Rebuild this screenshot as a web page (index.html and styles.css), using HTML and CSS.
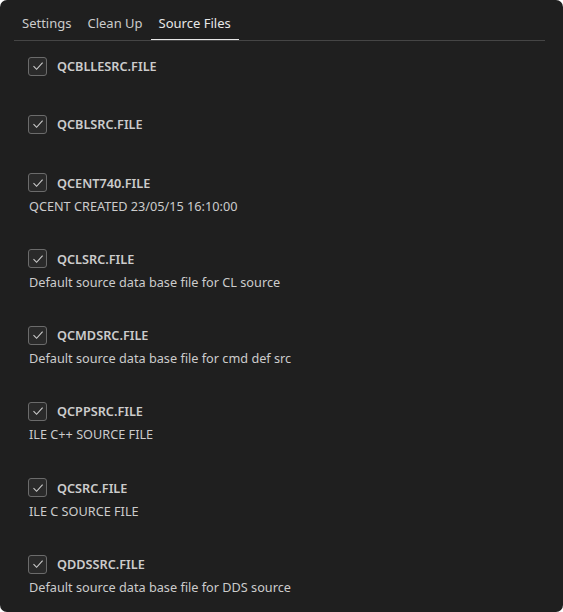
FILE: index.html
```html
<!DOCTYPE html>
<html>
<head>
<meta charset="utf-8">
<link rel="stylesheet" href="styles.css">
</head>
<body>
<div class="panel">
  <div class="tabs">
    <div class="tab">Settings</div>
    <div class="tab">Clean Up</div>
    <div class="tab active">Source Files</div>
  </div>
  <div class="list">
    <div class="item">
      <label class="row"><span class="cb"><svg viewBox="0 0 16 16"><path d="M3.5 8.2 L6.6 11.3 L12.6 4.6"/></svg></span><span class="name">QCBLLESRC.FILE</span></label>
    </div>
    <div class="item">
      <label class="row"><span class="cb"><svg viewBox="0 0 16 16"><path d="M3.5 8.2 L6.6 11.3 L12.6 4.6"/></svg></span><span class="name">QCBLSRC.FILE</span></label>
    </div>
    <div class="item">
      <label class="row"><span class="cb"><svg viewBox="0 0 16 16"><path d="M3.5 8.2 L6.6 11.3 L12.6 4.6"/></svg></span><span class="name">QCENT740.FILE</span></label>
      <div class="desc">QCENT CREATED 23/05/15 16:10:00</div>
    </div>
    <div class="item">
      <label class="row"><span class="cb"><svg viewBox="0 0 16 16"><path d="M3.5 8.2 L6.6 11.3 L12.6 4.6"/></svg></span><span class="name">QCLSRC.FILE</span></label>
      <div class="desc">Default source data base file for CL source</div>
    </div>
    <div class="item">
      <label class="row"><span class="cb"><svg viewBox="0 0 16 16"><path d="M3.5 8.2 L6.6 11.3 L12.6 4.6"/></svg></span><span class="name">QCMDSRC.FILE</span></label>
      <div class="desc">Default source data base file for cmd def src</div>
    </div>
    <div class="item">
      <label class="row"><span class="cb"><svg viewBox="0 0 16 16"><path d="M3.5 8.2 L6.6 11.3 L12.6 4.6"/></svg></span><span class="name">QCPPSRC.FILE</span></label>
      <div class="desc">ILE C++ SOURCE FILE</div>
    </div>
    <div class="item">
      <label class="row"><span class="cb"><svg viewBox="0 0 16 16"><path d="M3.5 8.2 L6.6 11.3 L12.6 4.6"/></svg></span><span class="name">QCSRC.FILE</span></label>
      <div class="desc">ILE C SOURCE FILE</div>
    </div>
    <div class="item">
      <label class="row"><span class="cb"><svg viewBox="0 0 16 16"><path d="M3.5 8.2 L6.6 11.3 L12.6 4.6"/></svg></span><span class="name">QDDSSRC.FILE</span></label>
      <div class="desc">Default source data base file for DDS source</div>
    </div>
  </div>
</div>
</body>
</html>
```
FILE: styles.css
```css
html, body {
  margin: 0;
  padding: 0;
  background: #ffffff;
}
body {
  width: 563px;
  height: 612px;
  overflow: hidden;
  font-family: "Noto Sans", "Open Sans", sans-serif;
  font-size: 12.7px;
  color: #cccccc;
}
.panel {
  width: 563px;
  height: 612px;
  box-sizing: border-box;
  background: #1f1f1f;
  border-radius: 7px;
  padding: 8px 18px 0 14px;
  overflow: hidden;
}
.tabs {
  display: flex;
  border-bottom: 1px solid #454545;
  height: 32px;
  box-sizing: content-box;
}
.tab {
  padding: 0 8px;
  height: 32px;
  line-height: 30px;
  box-sizing: border-box;
  color: #cccccc;
  font-size: 13px;
  white-space: nowrap;
}
.tab.active {
  color: #e7e7e7;
  border-bottom: 1px solid #e7e7e7;
}
.list {
  display: flex;
  flex-direction: column;
  gap: 30.3px;
  padding: 11px 0 0 14px;
}
.item {
  display: flex;
  flex-direction: column;
}
.row {
  display: flex;
  align-items: center;
  height: 28px;
  gap: 10px;
}
.cb {
  width: 17px;
  height: 17px;
  border: 1px solid #6b6b6b;
  border-radius: 3px;
  background: #2a2a2a;
  display: flex;
  align-items: center;
  justify-content: center;
}
.cb svg {
  width: 16px;
  height: 16px;
  fill: none;
  stroke: #cccccc;
  stroke-width: 1.1;
}
.name {
  font-weight: 600;
  color: #cccccc;
}
.desc {
  line-height: 18px;
  padding-left: 1px;
}
```
